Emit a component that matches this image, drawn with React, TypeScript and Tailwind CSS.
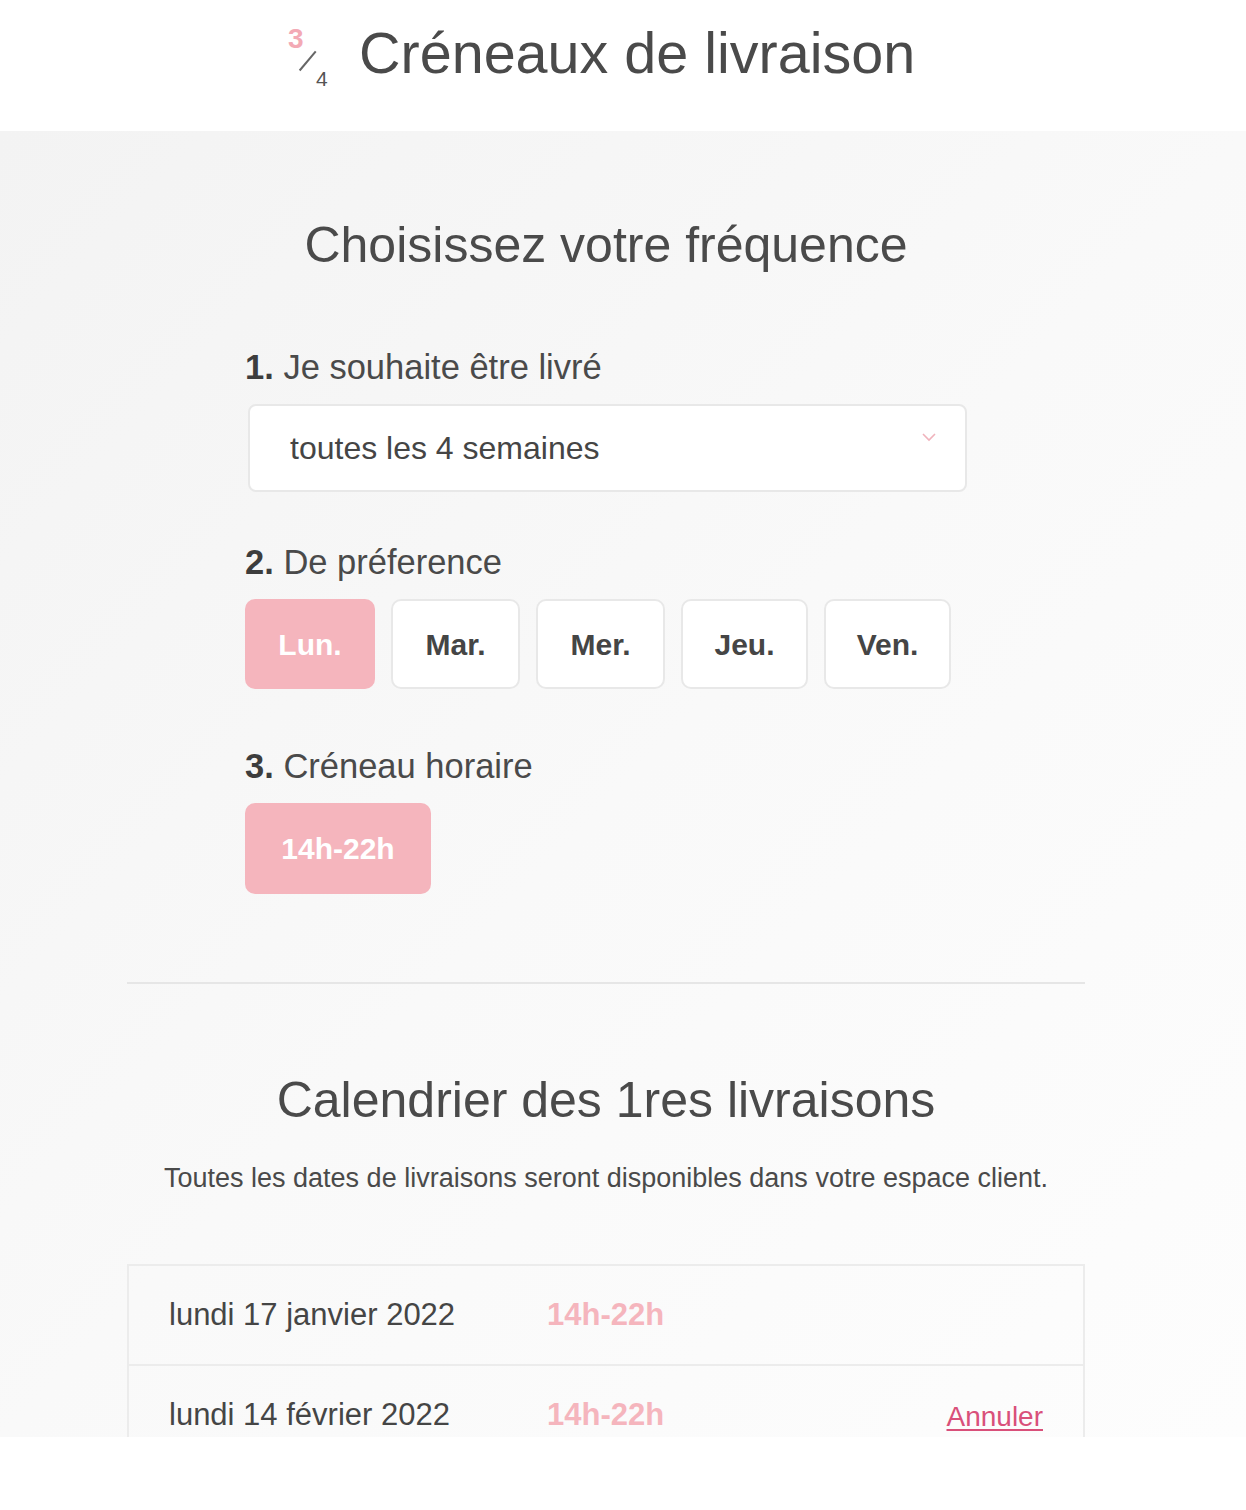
import React from 'react';

const days = ['Lun.', 'Mar.', 'Mer.', 'Jeu.', 'Ven.'];

const deliveries = [
  { date: 'lundi 17 janvier 2022', slot: '14h-22h', cancel: false },
  { date: 'lundi 14 février 2022', slot: '14h-22h', cancel: true },
];

const StepLabel = ({ n, text }: { n: number; text: string }) => (
  <p className="text-[34.5px] leading-[40px] text-[#4a4a4a]">
    <span className="font-bold text-[#3d3d3d]">{n}.</span> {text}
  </p>
);

const App = () => {
  return (
    <div className="w-[1246px] min-h-[1510px] bg-white font-['Liberation_Sans',Arial,sans-serif]">
      {/* header */}
      <div className="h-[131px] flex items-start pl-[287px] pt-[18px]">
        <div className="flex items-center gap-[26px]">
          <div className="relative w-[46px] h-[62px]">
            <span className="absolute left-[1px] top-[3px] text-[28px] leading-none font-bold text-[#f3aab5]">3</span>
            <span className="absolute left-[8px] top-[38px] w-[25px] h-[1.5px] bg-[#666] -rotate-[50deg] origin-center"></span>
            <span className="absolute left-[29px] top-[46px] text-[21px] leading-none text-[#555]">4</span>
          </div>
          <h1 className="text-[57.5px] leading-[70px] text-[#4a4a4a]">Créneaux de livraison</h1>
        </div>
      </div>

      {/* main */}
      <div className="h-[1306px] overflow-hidden bg-gradient-to-br from-[#f3f3f3] via-[#f9f9f9] to-[#fdfdfd]">
        <div className="w-[958px] ml-[127px] pt-[84px]">
          <h2 className="text-center text-[50px] leading-[60px] text-[#4a4a4a]">Choisissez votre fréquence</h2>

          <div className="w-[722px] mx-auto mt-[72px] pb-[88px]">
            <StepLabel n={1} text="Je souhaite être livré" />
            <div className="mt-[17px] ml-[3px] h-[88px] rounded-[8px] border-2 border-[#e8e8e8] bg-white flex items-center justify-between pl-[40px] pr-[28px]">
              <span className="text-[32px] text-[#454545]">toutes les 4 semaines</span>
              <svg width="16" height="10" viewBox="0 0 16 10" className="self-start mt-[26px]" fill="none">
                <path d="M2 2 L8 8 L14 2" stroke="#f0b3bc" strokeWidth="1.6" />
              </svg>
            </div>

            <div className="mt-[50px]">
              <StepLabel n={2} text="De préference" />
            </div>
            <div className="mt-[17px] flex gap-[16px]">
              {days.map((d, i) => (
                <button
                  key={d}
                  className={`h-[90px] rounded-[10px] text-[30px] font-bold ${i === 0 ? 'w-[130px] bg-[#f5b5bd] text-white' : i < 3 ? 'w-[129px] bg-white border-2 border-[#e8e8e8] text-[#454545]' : 'w-[127px] bg-white border-2 border-[#e8e8e8] text-[#454545]'}`}
                >
                  {d}
                </button>
              ))}
            </div>

            <div className="mt-[57px]">
              <StepLabel n={3} text="Créneau horaire" />
            </div>
            <button className="mt-[17px] w-[186px] h-[91px] rounded-[10px] bg-[#f5b5bd] text-white text-[30px] font-bold">14h-22h</button>
          </div>

          <div className="h-[2px] bg-[#e6e6e6]"></div>

          <h2 className="mt-[86px] text-center text-[50px] leading-[60px] text-[#4a4a4a]">Calendrier des 1res livraisons</h2>
          <p className="mt-[32px] text-center text-[27px] leading-[32px] text-[#4a4a4a]">
            Toutes les dates de livraisons seront disponibles dans votre espace client.
          </p>

          <div className="mt-[70px] border-2 border-[#ececec] border-b-0">
            {deliveries.map((r) => (
              <div key={r.date} className="h-[100px] border-b-2 border-[#ececec] flex items-center pl-[40px] pr-[40px]">
                <span className="w-[378px] text-[31px] leading-[30px] text-[#454545]">{r.date}</span>
                <span className="text-[31px] leading-[30px] font-bold text-[#f5b5bd]">{r.slot}</span>
                {r.cancel && (
                  <a href="#" className="ml-auto mt-[4px] text-[28px] leading-[28px] text-[#d9507a] underline decoration-2 underline-offset-[3px]">Annuler</a>
                )}
              </div>
            ))}
          </div>
        </div>
      </div>
    </div>
  );
};

export default App;
